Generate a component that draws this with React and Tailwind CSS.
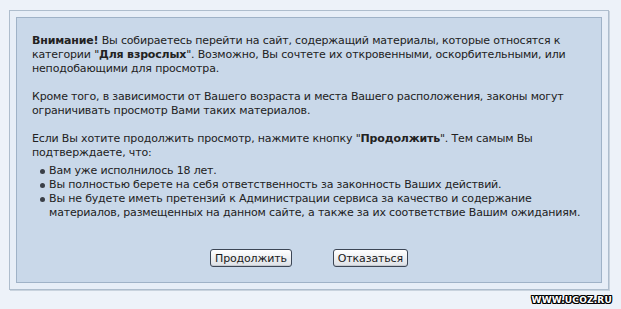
import React from "react";

const items = [
  "Вам уже исполнилось 18 лет.",
  "Вы полностью берете на себя ответственность за законность Ваших действий.",
  <>
    Вы не будете иметь претензий к Администрации сервиса за качество и содержание
    <br />
    материалов, размещенных на данном сайте, а также за их соответствие Вашим ожиданиям.
  </>,
];

function Btn({ children }) {
  return (
    <button className="h-[18px] px-[4px] rounded-[3px] border border-[#3c4655] bg-gradient-to-b from-white to-[#dde1e6] text-[11px] leading-none text-[#1a1a1a] tracking-[-0.15px] shadow-[inset_0_-1px_0_#c4c9d0]">
      {children}
    </button>
  );
}

export default function App() {
  return (
    <div
      className="w-[621px] h-[309px] bg-[#edf2f9] pt-[10px] pl-[9px] text-[#222] text-[11px] leading-[14px] tracking-[-0.17px] relative"
      style={{ fontFamily: '"DejaVu Sans", Verdana, sans-serif' }}
    >
      <div className="w-[600px] h-[280px] border border-[#aebdcd] bg-[#e7eef7] p-[6px] shadow-[1px_1px_0_#c9d3de]">
        <div className="h-full border border-[#9fb2c7] bg-[#c9d8e9] pl-[15px] pt-[16px]">
          <p>
            <b>Внимание!</b> Вы собираетесь перейти на сайт, содержащий материалы, которые относятся к
            <br />
            категории "<b>Для взрослых</b>". Возможно, Вы сочтете их откровенными, оскорбительными, или
            <br />
            неподобающими для просмотра.
          </p>
          <p className="mt-[14px]">
            Кроме того, в зависимости от Вашего возраста и места Вашего расположения, законы могут
            <br />
            ограничивать просмотр Вами таких материалов.
          </p>
          <p className="mt-[14px]">
            Если Вы хотите продолжить просмотр, нажмите кнопку "<b>Продолжить</b>". Тем самым Вы
            <br />
            подтверждаете, что:
          </p>
          <ul className="mt-[4px]">
            {items.map((t, i) => (
              <li key={i} className="flex">
                <span className="w-[17px] shrink-0 flex justify-center pt-[5px] pl-[3px]">
                  <span className="block w-[5px] h-[5px] rounded-full bg-[#3a3f47]" />
                </span>
                <span>{t}</span>
              </li>
            ))}
          </ul>
          <div className="flex justify-center gap-[41px] mt-[29px] pr-[15px]">
            <Btn>Продолжить</Btn>
            <Btn>Отказаться</Btn>
          </div>
        </div>
      </div>
      <div
        className="absolute right-[9px] bottom-[4px] text-white font-bold text-[9px] leading-none tracking-[0.2px]"
        style={{
          textShadow:
            "1px 0 0 #000,-1px 0 0 #000,0 1px 0 #000,0 -1px 0 #000,1px 1px 0 #000,-1px -1px 0 #000,1px -1px 0 #000,-1px 1px 0 #000",
        }}
      >
        WWW.UCOZ.RU
      </div>
    </div>
  );
}
